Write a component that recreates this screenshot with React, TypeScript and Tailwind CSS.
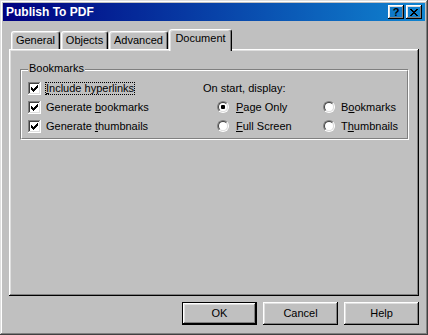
import React from "react";

const FONT = "font-['Liberation_Sans',Arial,sans-serif]";
const RAISED =
  "shadow-[inset_-1px_-1px_#000,inset_1px_1px_#fff,inset_-2px_-2px_#808080,inset_2px_2px_#dfdfdf]";

// classic 7x7 tick, each column 3px tall
const TICK = [5, 6, 7, 6, 5, 4, 3];

function CheckBox({ checked }: { checked: boolean }) {
  return (
    <span className="flex h-[13px] w-[13px] shrink-0 bg-white shadow-[inset_-1px_-1px_#fff,inset_1px_1px_#808080,inset_-2px_-2px_#dfdfdf,inset_2px_2px_#404040]">
      {checked && (
        <svg width="13" height="13" viewBox="0 0 13 13" shapeRendering="crispEdges">
          {TICK.map((y, i) => (
            <rect key={i} x={3 + i} y={y} width="1" height="3" fill="#000" />
          ))}
        </svg>
      )}
    </span>
  );
}

function Radio({ on }: { on?: boolean }) {
  return (
    <span className="flex h-[12px] w-[12px] shrink-0 rounded-full border border-t-[#808080] border-l-[#808080] border-r-white border-b-white">
      <span className="flex flex-1 items-center justify-center rounded-full border border-t-[#404040] border-l-[#404040] border-r-[#dfdfdf] border-b-[#dfdfdf] bg-white">
        {on && <span className="h-[4px] w-[4px] rounded-[1px] bg-black" />}
      </span>
    </span>
  );
}

function Label({ children, focus }: { children: React.ReactNode; focus?: boolean }) {
  return (
    <span
      className={
        "border leading-[11px] whitespace-nowrap " +
        (focus ? "border-dotted border-black" : "border-transparent")
      }
    >
      {children}
    </span>
  );
}

function Tab({ label, w, active }: { label: string; w: string; active?: boolean }) {
  return (
    <div
      className={
        w +
        " rounded-t-[3px] border-t border-l border-r border-white border-r-black pt-[2px] text-center leading-[13px] shadow-[inset_-1px_0_#808080,inset_1px_1px_#dfdfdf] " +
        (active ? "relative z-10 -mb-[2px] h-[22px] bg-[#c0c0c0]" : "h-[18px]")
      }
    >
      {label}
    </div>
  );
}

function Button({ label, primary }: { label: string; primary?: boolean }) {
  return (
    <div
      className={
        "flex h-[23px] w-[75px] items-center justify-center " +
        RAISED +
        (primary ? " border border-black" : "")
      }
    >
      {label}
    </div>
  );
}

export default function App() {
  return (
    <div
      className={
        FONT +
        " flex h-[335px] w-[428px] flex-col bg-[#c0c0c0] p-[3px] text-[11px] text-black shadow-[inset_-1px_-1px_#404040,inset_1px_1px_#dfdfdf,inset_-2px_-2px_#808080,inset_2px_2px_#fff]"
      }
    >
      {/* title bar */}
      <div className="flex h-[18px] items-center bg-[linear-gradient(to_right,#000080,#1084d0)] pl-[3px] pr-[3px]">
        <span className="flex-1 text-[12px] font-bold text-white">Publish To PDF</span>
        <div className={"flex h-[14px] w-[16px] items-center justify-center text-[11px] font-bold leading-none " + RAISED}>
          ?
        </div>
        <div className={"ml-[2px] flex h-[14px] w-[16px] items-center justify-center " + RAISED}>
          <svg width="8" height="7" viewBox="0 0 8 7" shapeRendering="crispEdges">
            <path
              d="M0 0h2v1h-2zM6 0h2v1h-2zM1 1h2v1h-2zM5 1h2v1h-2zM2 2h4v1h-4zM3 3h2v1h-2zM2 4h4v1h-4zM1 5h2v1h-2zM5 5h2v1h-2zM0 6h2v1h-2zM6 6h2v1h-2z"
              fill="#000"
            />
          </svg>
        </div>
      </div>

      {/* tabs */}
      <div className="mx-[6px] mt-[8px] flex h-[20px] items-end pl-[2px]">
        <Tab label="General" w="w-[49px]" />
        <div className="ml-[1px]">
          <Tab label="Objects" w="w-[47px]" />
        </div>
        <div className="ml-[1px]">
          <Tab label="Advanced" w="w-[59px]" />
        </div>
        <div className="ml-[1px]">
          <Tab label="Document" w="w-[63px]" active />
        </div>
      </div>

      {/* tab page */}
      <div className={"mx-[6px] h-[247px] pl-[11px] pr-[10px] pt-[20px] " + RAISED}>
        <div className="relative h-[71px] border border-t-[#808080] border-l-[#808080] border-r-white border-b-white">
          <span className="absolute left-[7px] top-[-8px] bg-[#c0c0c0] px-[1px] leading-[13px]">Bookmarks</span>
          <div className="grid h-full grid-cols-[175px_120px_1fr] grid-rows-[19px_19px_1fr] border border-t-white border-l-white border-r-[#808080] border-b-[#808080] pl-[6px] pt-[11px]">
            <div className="flex items-start gap-[4px]">
              <CheckBox checked />
              <Label focus>
                <u>I</u>nclude hyperlinks
              </Label>
            </div>
            <div className="col-span-2 leading-[13px]">On start, display:</div>

            <div className="flex items-start gap-[4px]">
              <CheckBox checked />
              <Label>
                Generate <u>b</u>ookmarks
              </Label>
            </div>
            <div className="flex items-start gap-[6px] pl-[14px]">
              <Radio on />
              <Label>
                <u>P</u>age Only
              </Label>
            </div>
            <div className="flex items-start gap-[5px]">
              <Radio />
              <Label>
                B<u>o</u>okmarks
              </Label>
            </div>

            <div className="flex items-start gap-[4px]">
              <CheckBox checked />
              <Label>
                Generate <u>t</u>humbnails
              </Label>
            </div>
            <div className="flex items-start gap-[6px] pl-[14px]">
              <Radio />
              <Label>
                <u>F</u>ull Screen
              </Label>
            </div>
            <div className="flex items-start gap-[5px]">
              <Radio />
              <Label>
                T<u>h</u>umbnails
              </Label>
            </div>
          </div>
        </div>
      </div>

      {/* buttons */}
      <div className="mr-[6px] mt-[6px] flex justify-end gap-[6px]">
        <Button label="OK" primary />
        <Button label="Cancel" />
        <Button label="Help" />
      </div>
    </div>
  );
}
